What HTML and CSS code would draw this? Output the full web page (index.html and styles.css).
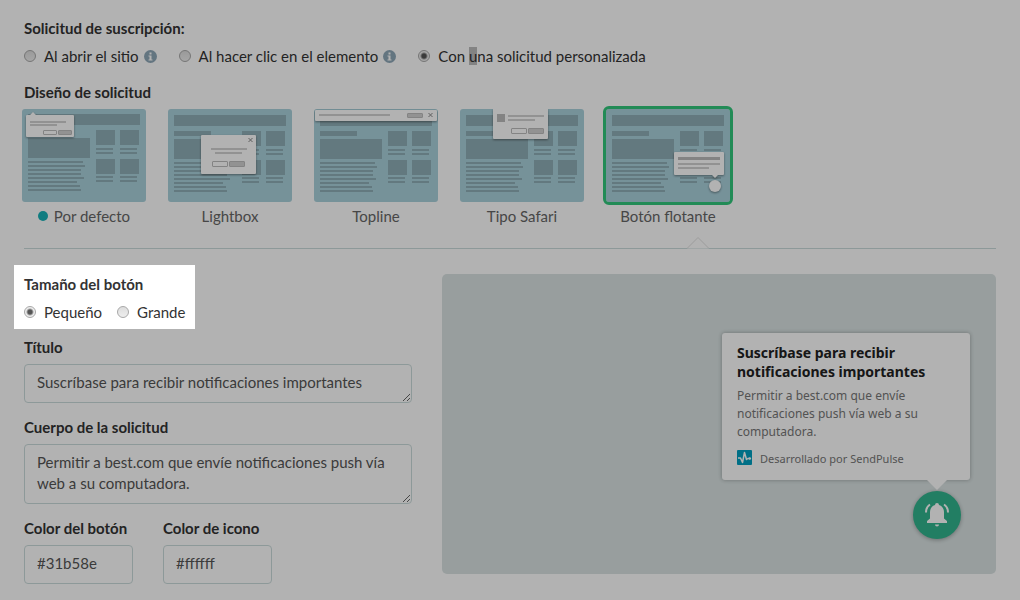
FILE: index.html
```
<!DOCTYPE html>
<html lang="es">
<head>
    <meta charset="utf-8">
    <title>Solicitud de suscripción</title>
    <meta name="viewport" content="width=device-width, initial-scale=1">
    <link rel="stylesheet" href="styles.css">
</head>
<body>
    <!-- shared shapes -->
    <svg class="defs" aria-hidden="true">
        <symbol id="page" viewBox="0 0 124 93">
            <path d="M6 6h112v11H6zM6 22h37v5H6zM6 30h62v20H6z
                M6 53h55v2H6zM6 57h57v2H6zM6 61h53v2H6zM6 65h53v2H6zM6 69h56v2H6zM6 73h49v2H6zM6 77h52v2H6zM6 81h53v2H6z
                M74 22h19v15H74zM98 22h19v15H98zM74 40h17v2H74zM98 40h17v2H98zM74 44h17v2H74zM98 44h17v2H98z
                M74 51h19v15H74zM98 51h19v15H98zM74 68h17v2H74zM98 68h17v2H98zM74 72h17v2H74zM98 72h17v2H98z"/>
        </symbol>
        <symbol id="info" viewBox="0 0 13 13">
            <circle cx="6.5" cy="6.5" r="6.5" fill="#8fa8b8"/>
            <path fill="#fff" d="M5.5 2.5h2v2h-2zM4.5 5.5h3v4h1v1h-4v-1h1v-3h-1z"/>
        </symbol>
    </svg>

    <main class="settings">
        <fieldset class="group">
            <legend class="group-title">Solicitud de suscripción:</legend>
            <div class="radios radios-wide">
                <label class="radio"><input type="radio" name="request" value="open"><span>Al abrir el sitio</span><svg class="info"><use href="#info"/></svg></label>
                <label class="radio"><input type="radio" name="request" value="click"><span>Al hacer clic en el elemento</span><svg class="info"><use href="#info"/></svg></label>
                <label class="radio"><input type="radio" name="request" value="custom" checked><span>Con <mark>u</mark>na solicitud personalizada</span></label>
            </div>
        </fieldset>

        <section>
            <h2 class="group-title">Diseño de solicitud</h2>
            <div class="layouts">
                <button type="button" class="layout">
                    <svg class="thumb" viewBox="0 0 124 93">
                        <use href="#page" y="-1" width="124" height="93"/>
                        <path class="pop" d="M5 6h3l3-3 3 3h37a1 1 0 0 1 1 1v20a1 1 0 0 1-1 1H5a1 1 0 0 1-1-1V7a1 1 0 0 1 1-1z"/>
                        <path class="line" d="M8 12h36v2H8zM8 15h27v2H8z"/>
                        <rect class="btn" x="21.5" y="21.5" width="13" height="4" rx="0.5"/>
                        <rect class="btn btn-full" x="36.5" y="21.5" width="13" height="4" rx="0.5"/>
                    </svg>
                    <span class="layout-name"><i class="dot"></i>Por defecto</span>
                </button>
                <button type="button" class="layout">
                    <svg class="thumb" viewBox="0 0 124 93">
                        <use href="#page" width="124" height="93"/>
                        <rect class="pop" x="33" y="26" width="55" height="39" rx="1"/>
                        <path class="line" d="M43 39h36v2H43zM47 43h27v2H47z"/>
                        <rect class="btn" x="44.5" y="52.5" width="15" height="5" rx="0.5"/>
                        <rect class="btn btn-full" x="61.5" y="52.5" width="15" height="5" rx="0.5"/>
                        <path class="cross" d="M80.5 29l4 4M84.5 29l-4 4"/>
                    </svg>
                    <span class="layout-name">Lightbox</span>
                </button>
                <button type="button" class="layout">
                    <svg class="thumb" viewBox="0 0 124 93">
                        <use href="#page" width="124" height="93"/>
                        <rect class="pop" x="1" y="1" width="122" height="11" rx="1"/>
                        <path class="line" d="M5 5h71v2H5z"/>
                        <rect class="btn btn-full" x="93.5" y="4.5" width="15" height="4" rx="0.5"/>
                        <path class="cross" d="M114.5 4l4 4M118.5 4l-4 4"/>
                    </svg>
                    <span class="layout-name">Topline</span>
                </button>
                <button type="button" class="layout">
                    <svg class="thumb" viewBox="0 0 124 93">
                        <use href="#page" width="124" height="93"/>
                        <path class="pop" d="M33 0h55v29a1 1 0 0 1-1 1H34a1 1 0 0 1-1-1z"/>
                        <path class="photo" d="M37 5h8v8h-8z"/>
                        <path class="line" d="M48 6h36v2H48zM48 10h27v2H48z"/>
                        <rect class="btn" x="51.5" y="19.5" width="15" height="5" rx="0.5"/>
                        <rect class="btn btn-full" x="68.5" y="19.5" width="15" height="5" rx="0.5"/>
                    </svg>
                    <span class="layout-name">Tipo Safari</span>
                </button>
                <button type="button" class="layout active">
                    <svg class="thumb" viewBox="0 0 124 93">
                        <use href="#page" width="124" height="93"/>
                        <path class="pop" d="M69 43h48a1 1 0 0 1 1 1v21a1 1 0 0 1-1 1h-5l-3 3-3-3H69a1 1 0 0 1-1-1V44a1 1 0 0 1 1-1z"/>
                        <path class="photo" d="M72 48h42v3H72z"/>
                        <path class="line" d="M72 54h42v2H72zM72 58h31v2H72z"/>
                        <circle class="pop" cx="109" cy="77" r="6"/>
                    </svg>
                    <span class="layout-name">Botón flotante</span>
                </button>
            </div>
        </section>

        <div class="divider">
            <svg class="notch" viewBox="0 0 22 12"><path d="M0 11.5L11 .5l11 11"/></svg>
        </div>

        <div class="columns">
            <form class="form">
                <fieldset class="group spotlight">
                    <legend class="group-title">Tamaño del botón</legend>
                    <div class="radios">
                        <label class="radio"><input type="radio" name="size" value="small" checked><span>Pequeño</span></label>
                        <label class="radio"><input type="radio" name="size" value="big"><span>Grande</span></label>
                    </div>
                </fieldset>
                <div class="field">
                    <label for="title">Título</label>
                    <textarea id="title" rows="1">Suscríbase para recibir notificaciones importantes</textarea>
                </div>
                <div class="field">
                    <label for="text">Cuerpo de la solicitud</label>
                    <textarea id="text" rows="2">Permitir a best.com que envíe notificaciones push vía web a su computadora.</textarea>
                </div>
                <div class="colors">
                    <div class="field">
                        <label for="button-color">Color del botón</label>
                        <input type="text" id="button-color" value="#31b58e">
                    </div>
                    <div class="field">
                        <label for="icon-color">Color de icono</label>
                        <input type="text" id="icon-color" value="#ffffff">
                    </div>
                </div>
            </form>

            <div class="preview">
                <div class="popup">
                    <h3>Suscríbase para recibir notificaciones importantes</h3>
                    <p>Permitir a best.com que envíe notificaciones push vía web a su computadora.</p>
                    <div class="powered">
                        <svg class="logo" viewBox="0 0 15 15">
                            <rect width="15" height="15" rx="1" fill="#00a0c0"/>
                            <path d="M1 8h2.500l2 4.500L7.500 2.500l2 7 1.500-1h2" fill="none" stroke="#fff" stroke-width="1.500" stroke-linejoin="round"/>
                            <circle cx="12.8" cy="8.5" r="1.3" fill="#fff"/>
                        </svg>
                        <span>Desarrollado por SendPulse</span>
                    </div>
                </div>
                <button type="button" class="bell" aria-label="Suscribirse">
                    <svg viewBox="0 0 24 24">
                        <path d="M12 0a2 2 0 0 0-2 2C6.500 3 5 6 5 9v6.500L2 18v2h20v-2l-3-2.500V9c0-3-1.500-6-5-7a2 2 0 0 0-2-2zM10 21.500a2 2 0 0 0 4 0z"/>
                        <path class="ring" d="M1 9.500C1 6 2.500 3 5 1.500M23 9.500c0-3.500-1.500-6.500-4-8"/>
                    </svg>
                </button>
            </div>
        </div>
    </main>
</body>
</html>
```
FILE: styles.css
```
* {
    box-sizing: border-box;
}

body {
    margin: 0;
    background: #fff;
    color: #333;
    font: 15px/20px Lato, "Noto Sans", sans-serif;
}

button, input, textarea {
    font: inherit;
    color: inherit;
}

.defs {
    display: none;
}

.settings {
    padding: 18px 24px 16px;
}

/* groups and radios */
.group {
    margin: 0 0 16px;
    padding: 0;
    border: 0;
    min-width: 0;
}

.group-title, .field label {
    display: block;
    margin: 0;
    padding: 0;
    font-size: 15px;
    line-height: 20px;
    font-weight: 700;
}

.radios {
    display: flex;
    flex-wrap: wrap;
    gap: 15px;
    padding-top: 8px;
}

.radios-wide {
    gap: 22px;
}

.radio {
    display: flex;
    align-items: center;
    height: 20px;
}

.radio input {
    appearance: none;
    width: 12px;
    height: 12px;
    margin: 0 8px 0 0;
    border: 1px solid #a8a8a8;
    border-radius: 50%;
    background: linear-gradient(#ddd, #eee);
}

.radio input:checked {
    background: radial-gradient(circle, #555 0, #555 2px, #eee 4px);
}

.radio mark {
    background: #bcbcbc;
    color: inherit;
}

.info {
    width: 13px;
    height: 13px;
    margin-left: 5px;
}

/* layout thumbnails */
.layouts {
    display: flex;
    flex-wrap: wrap;
    gap: 16px;
    margin: 4px 0 0 -5px;
}

.layout {
    width: 130px;
    padding: 0;
    border: 0;
    background: none;
    color: #666;
    cursor: pointer;
}

.thumb {
    display: block;
    width: 130px;
    height: 99px;
    border: 3px solid transparent;
    border-radius: 6px;
    background: #aad1dc padding-box;
    fill: #8faeb6;
}

.active .thumb {
    border-color: #31c87c;
}

.thumb .pop {
    fill: #fff;
    filter: drop-shadow(0 1px 1px rgba(0, 0, 0, .4));
}

.thumb .line {
    fill: #d2d2d2;
}

.thumb .photo {
    fill: #bcbcbc;
}

.thumb .btn {
    fill: #fff;
    stroke: #bcbcbc;
}

.thumb .btn-full {
    fill: #d2d2d2;
}

.thumb .cross {
    stroke: #888;
}

.layout-name {
    display: flex;
    align-items: center;
    justify-content: center;
    gap: 6px;
    margin-top: 1px;
}

.dot {
    width: 10px;
    height: 10px;
    border-radius: 50%;
    background: #18b2b8;
}

.divider {
    position: relative;
    margin: 22px 0 25px;
    border-top: 1px solid #cbdcdc;
}

.notch {
    position: absolute;
    left: 663px;
    bottom: 0;
    width: 22px;
    height: 12px;
    fill: #fff;
    stroke: #e0e0e0;
}

/* form */
.columns {
    display: flex;
    gap: 30px;
}

.form {
    width: 388px;
}

/* dims everything around the highlighted group */
.spotlight {
    position: relative;
    z-index: 10;
    width: fit-content;
    margin: -9px -10px 8px;
    padding: 9px 10px 7px;
    box-shadow: 0 0 0 9999px rgba(0, 0, 0, .3);
}

.spotlight .group-title {
    float: left;
}

.spotlight .radios {
    clear: both;
}

.field {
    margin-bottom: 14px;
}

.field textarea, .field input {
    display: block;
    width: 100%;
    margin-top: 7px;
    padding: 7px 12px 9px;
    border: 1px solid #cbdcdc;
    border-radius: 4px;
    background: #fff;
    color: #555;
    line-height: 21px;
}

.colors {
    display: flex;
    gap: 30px;
}

.colors .field {
    width: 109px;
    margin: 0;
}

/* preview */
.preview {
    display: flex;
    flex: 1;
    flex-direction: column;
    align-items: flex-end;
    justify-content: flex-end;
    height: 300px;
    padding: 0 26px 35px;
    border-radius: 5px;
    background: #dae3e3;
}

.popup {
    position: relative;
    width: 248px;
    margin-bottom: 11px;
    padding: 10px 15px 12px;
    border-radius: 3px;
    background: #fff;
    box-shadow: 0 0 4px rgba(0, 0, 0, .3);
    font-family: "Noto Sans", sans-serif;
}

.popup::after {
    content: "";
    position: absolute;
    top: 100%;
    right: 23px;
    border: 10px solid transparent;
    border-top-color: #fff;
    border-bottom: 0;
}

.popup h3 {
    margin: 0 0 6px;
    color: #222;
    font-size: 14px;
    line-height: 19px;
}

.popup p {
    margin: 0 0 9px;
    color: #777;
    font-size: 12px;
    line-height: 18px;
}

.powered {
    display: flex;
    gap: 8px;
    color: #777;
    font-size: 11px;
    line-height: 18px;
}

.logo {
    width: 15px;
    height: 15px;
}

.bell {
    display: flex;
    align-items: center;
    justify-content: center;
    width: 48px;
    height: 48px;
    margin-right: 9px;
    padding: 0;
    border: 0;
    border-radius: 50%;
    background: #31b58e;
    box-shadow: 0 1px 4px rgba(0, 0, 0, .3);
}

.bell svg {
    width: 24px;
    height: 24px;
    fill: #fff;
}

.bell .ring {
    fill: none;
    stroke: #fff;
    stroke-width: 2;
}
```
